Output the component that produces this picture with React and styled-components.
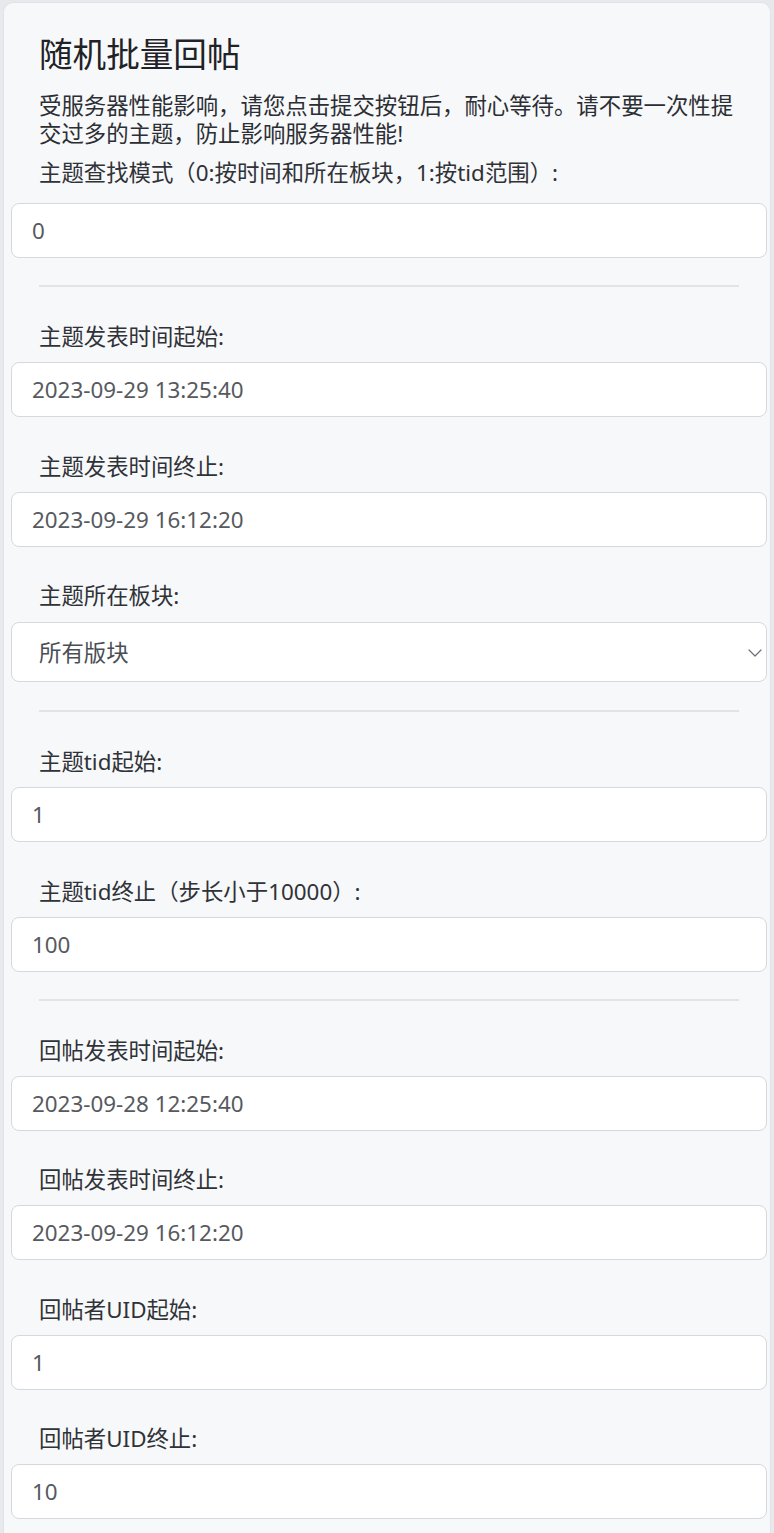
import React from "react";
import styled, { createGlobalStyle } from "styled-components";

const GlobalStyle = createGlobalStyle`
  html, body {
    margin: 0;
    padding: 0;
    background: #e7e9ec;
  }
  body {
    font-family: "Noto Sans", "Noto Sans CJK SC", sans-serif;
    -webkit-font-smoothing: antialiased;
  }
  * { box-sizing: border-box; }
`;

const Card = styled.div`
  margin: 2px 3px 0;
  background: #f7f8fa;
  border: 1px solid #e0e3e7;
  border-bottom: none;
  border-radius: 10px 10px 0 0;
  padding: 31px 3px 40px 7px;
  min-height: 1540px;
`;

const Header = styled.div`
  padding: 0 28px;
  display: flex;
  flex-direction: column;
`;

const Title = styled.h3`
  margin: 0;
  font-size: 33.6px;
  line-height: 40px;
  font-weight: 400;
  color: #1f2226;
`;

const Desc = styled.p`
  margin: 18px 0 0;
  font-size: 22.4px;
  line-height: 28px;
  color: #2b2e33;
`;

const Label = styled.label`
  display: block;
  padding: 0 28px;
  font-size: 22.4px;
  line-height: 28px;
  color: #2f3237;
  margin: ${(p) => (p.$lead ? "11px 0 16px" : "0")};
`;

const Section = styled.div`
  display: flex;
  flex-direction: column;
  gap: 35.5px;
`;

const Field = styled.div`
  display: flex;
  flex-direction: column;
  gap: ${(p) => (p.$select ? "12px" : "11px")};
`;

const Input = styled.input`
  display: block;
  width: 100%;
  height: 55px;
  margin: 0;
  padding: 0 20px;
  border: 1.4px solid #d5d9de;
  border-radius: 8px;
  background: #ffffff;
  font-family: "Noto Sans", "Noto Sans CJK SC", sans-serif;
  font-size: 22.4px;
  color: #565a60;
  outline: none;
`;

const SelectWrap = styled.div`
  position: relative;
`;

const Select = styled.select`
  display: block;
  width: 100%;
  height: 60px;
  margin: 0;
  padding: 0 48px 0 27px;
  border: 1.4px solid #d5d9de;
  border-radius: 8px;
  background: #ffffff;
  font-family: "Noto Sans", "Noto Sans CJK SC", sans-serif;
  font-size: 22.4px;
  color: #4a4e54;
  appearance: none;
  -webkit-appearance: none;
  outline: none;
`;

const Chevron = styled.svg`
  position: absolute;
  right: 5px;
  top: 50%;
  width: 14px;
  height: 8px;
  margin-top: -3px;
  pointer-events: none;
`;

const Divider = styled.hr`
  border: none;
  height: 2px;
  background: #e1e3e7;
  margin: ${(p) => (p.$after === "select" ? "28px" : "27px")} 28px 36px;
`;

function TextField({ label, value }) {
  return (
    <Field>
      <Label>{label}</Label>
      <Input defaultValue={value} />
    </Field>
  );
}

export default function App() {
  return (
    <>
      <GlobalStyle />
      <Card>
        <Header>
          <Title>随机批量回帖</Title>
          <Desc>
            受服务器性能影响，请您点击提交按钮后，耐心等待。请不要一次性提交过多的主题，防止影响服务器性能!
          </Desc>
        </Header>
        <Label $lead>主题查找模式（0:按时间和所在板块，1:按tid范围）:</Label>
        <Input defaultValue="0" />

        <Divider />

        <Section>
          <TextField label="主题发表时间起始:" value="2023-09-29 13:25:40" />
          <TextField label="主题发表时间终止:" value="2023-09-29 16:12:20" />
          <Field $select>
            <Label>主题所在板块:</Label>
            <SelectWrap>
              <Select defaultValue="all">
                <option value="all">所有版块</option>
              </Select>
              <Chevron viewBox="0 0 14 8" fill="none">
                <path d="M1 1l6 6 6-6" stroke="#6b6f75" strokeWidth="1.2" strokeLinecap="round" strokeLinejoin="round" />
              </Chevron>
            </SelectWrap>
          </Field>
        </Section>

        <Divider $after="select" />

        <Section>
          <TextField label="主题tid起始:" value="1" />
          <TextField label="主题tid终止（步长小于10000）:" value="100" />
        </Section>

        <Divider />

        <Section>
          <TextField label="回帖发表时间起始:" value="2023-09-28 12:25:40" />
          <TextField label="回帖发表时间终止:" value="2023-09-29 16:12:20" />
          <TextField label="回帖者UID起始:" value="1" />
          <TextField label="回帖者UID终止:" value="10" />
        </Section>
      </Card>
    </>
  );
}
